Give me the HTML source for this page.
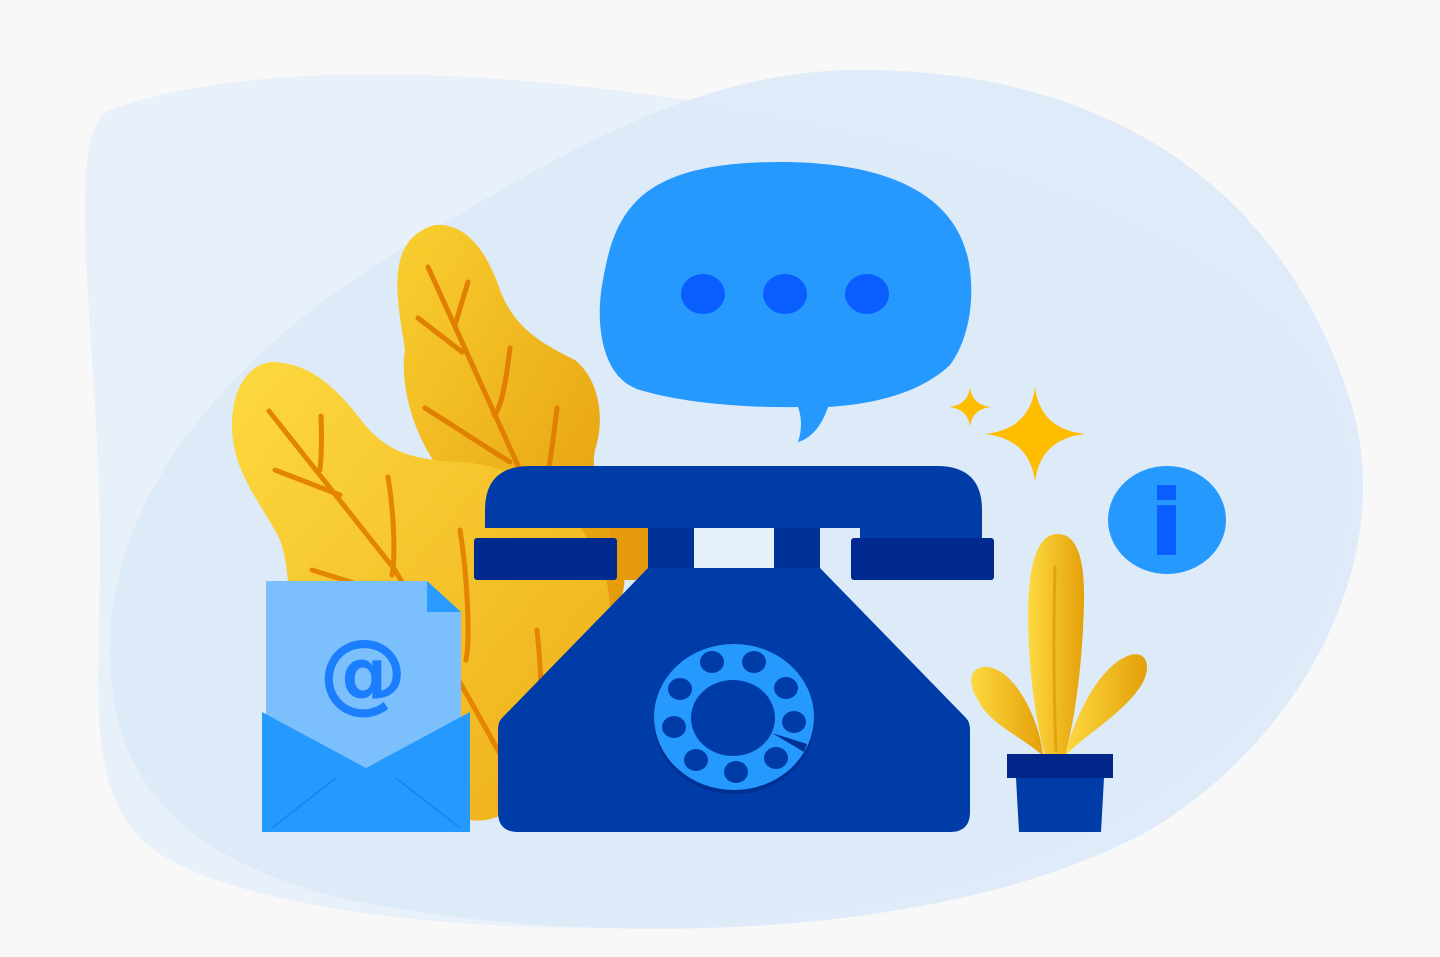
<!DOCTYPE html>
<html><head><meta charset="utf-8"><style>html,body{margin:0;padding:0;background:#f8f8f9;}svg{display:block}</style></head>
<body>
<svg width="1440" height="957" viewBox="0 0 1440 957" xmlns="http://www.w3.org/2000/svg">
<defs>
<linearGradient id="ly" x1="0" y1="0" x2="1" y2="1"><stop offset="0" stop-color="#fdd93f"/><stop offset="1" stop-color="#eeae18"/></linearGradient>
<linearGradient id="ly2" x1="0" y1="0" x2="1" y2="1"><stop offset="0" stop-color="#f9cf30"/><stop offset="1" stop-color="#e49a0b"/></linearGradient>
<linearGradient id="lh" x1="0" y1="0" x2="1" y2="0"><stop offset="0" stop-color="#fdd940"/><stop offset="1" stop-color="#e4a008"/></linearGradient>
</defs>
<rect width="1440" height="957" fill="#f8f8f9"/>
<path d="M110 110 C300 40 700 80 1000 170 C1250 250 1370 360 1350 520 C1330 700 1150 850 900 900 C650 950 300 930 170 860 C80 810 100 700 100 550 C100 350 60 130 110 110 Z" fill="#e3eef9" opacity="0.8"/>
<path d="M860 70 C1100 70 1280 180 1350 400 C1400 560 1300 740 1150 830 C950 940 600 950 350 900 C180 860 110 780 110 650 C110 480 250 330 450 220 C600 130 720 70 860 70 Z" fill="#dbe9f8" opacity="0.85"/>
<!-- back leaf -->
<path d="M435 225 C470 222 490 260 500 290 C515 330 545 345 575 360 C600 380 605 420 595 450 C585 500 640 560 620 600 C600 620 560 610 540 590 C500 560 470 520 440 470 C410 430 400 380 405 350 C400 310 380 240 435 225 Z" fill="url(#ly2)"/>
<g stroke="#e07f00" stroke-width="5" stroke-linecap="round" fill="none">
<path d="M428 267 L520 470 L560 570"/><path d="M468 282 L455 325"/><path d="M418 318 L462 352"/><path d="M510 348 C505 390 500 410 494 415"/><path d="M425 408 C460 430 490 450 510 462"/><path d="M557 408 C552 450 548 480 543 490"/>
</g>
<!-- front leaf -->
<path d="M275 362 C320 365 345 400 365 425 C390 455 420 460 460 462 C520 465 570 500 600 560 C625 620 600 700 560 760 C530 800 500 825 470 820 L300 700 C285 650 295 580 280 540 C260 500 230 470 232 420 C234 385 250 362 275 362 Z" fill="url(#ly)"/>
<g stroke="#e38500" stroke-width="5" stroke-linecap="round" fill="none">
<path d="M269 411 L395 570 L470 700 L520 790"/><path d="M321 416 C322 440 321 460 320 470"/><path d="M275 470 L340 495"/><path d="M388 477 C395 520 395 560 392 575"/><path d="M312 570 L360 585"/><path d="M460 530 C468 580 470 640 466 660"/><path d="M537 630 C540 660 542 690 540 700"/>
</g>
<!-- envelope -->
<path d="M266 581 L427 581 L461 612 L461 770 L266 770 Z" fill="#7bbffc"/>
<path d="M427 581 L461 612 L427 612 Z" fill="#2b9bff"/>
<text x="363" y="702" font-family="DejaVu Sans, sans-serif" font-weight="bold" font-size="88" fill="#1b7eff" text-anchor="middle">@</text>
<path d="M262 712 L366 768 L470 712 L470 832 L262 832 Z" fill="#2699ff"/>
<g stroke="#1b86f0" stroke-width="2"><path d="M272 828 L336 778"/><path d="M460 828 L396 778"/></g>
<!-- speech bubble -->
<path d="M780 162 C880 162 960 190 970 270 C975 310 965 345 950 365 C915 398 860 405 828 407 C822 425 812 438 798 442 C802 430 802 418 798 407 C740 408 680 402 640 390 C600 378 595 320 603 280 C615 210 640 162 780 162 Z" fill="#2699ff"/>
<ellipse cx="703" cy="294" rx="22" ry="20" fill="#0a5dff"/><ellipse cx="785" cy="294" rx="22" ry="20" fill="#0a5dff"/><ellipse cx="867" cy="294" rx="22" ry="20" fill="#0a5dff"/>
<!-- stars -->
<path d="M1035 387 Q1040 429 1085 434 Q1040 439 1035 482 Q1030 439 985 434 Q1030 429 1035 387 Z" fill="#ffbd00"/>
<path d="M970 387 Q972 405 991 407 Q972 409 970 427 Q968 409 949 407 Q968 405 970 387 Z" fill="#ffbd00"/>
<!-- info -->
<ellipse cx="1167" cy="520" rx="59" ry="54" fill="#2699ff"/>
<rect x="1157" y="485" width="19" height="15" fill="#0a5dff"/><rect x="1157" y="505" width="19" height="50" fill="#0a5dff"/>
<!-- phone -->
<rect x="610" y="520" width="40" height="60" fill="#e49a0b"/>
<rect x="694" y="528" width="80" height="40" fill="#e6f0fa"/>
<path d="M485 540 L485 510 Q485 466 530 466 L937 466 Q982 466 982 510 L982 540 L860 540 L860 528 L485 528 Z" fill="#003ca8"/>
<rect x="485" y="520" width="497" height="8" fill="#003ca8"/>
<rect x="648" y="528" width="46" height="45" fill="#003197"/><rect x="774" y="528" width="46" height="45" fill="#003197"/>
<path d="M648 568 L820 568 L966 718 Q970 722 970 730 L970 812 Q970 832 950 832 L518 832 Q498 832 498 812 L498 730 Q498 722 502 718 Z" fill="#003ca8"/>
<rect x="474" y="538" width="143" height="42" rx="3" fill="#002a8f"/>
<rect x="851" y="538" width="143" height="42" rx="3" fill="#002a8f"/>
<ellipse cx="734" cy="722" rx="80" ry="72" fill="#002f92"/>
<ellipse cx="734" cy="717" rx="80" ry="73" fill="#2699ff"/>
<ellipse cx="733" cy="718" rx="42" ry="38" fill="#003ca8"/>
<path d="M772 733 L807 744 L804 752 Z" fill="#003197"/>
<g fill="#003ca8">
<ellipse cx="712" cy="662" rx="12" ry="11"/><ellipse cx="754" cy="662" rx="12" ry="11"/><ellipse cx="786" cy="688" rx="12" ry="11"/><ellipse cx="794" cy="722" rx="12" ry="11"/><ellipse cx="776" cy="758" rx="12" ry="11"/><ellipse cx="736" cy="772" rx="12" ry="11"/><ellipse cx="696" cy="760" rx="12" ry="11"/><ellipse cx="674" cy="727" rx="12" ry="11"/><ellipse cx="680" cy="689" rx="12" ry="11"/>
</g>
<!-- plant -->
<path d="M1045 756 C1030 700 1025 620 1030 580 C1035 545 1045 534 1058 534 C1075 534 1085 555 1084 600 C1083 660 1075 720 1065 756 Z" fill="url(#lh)"/>
<path d="M1055 566 C1053 640 1054 700 1056 752" stroke="#e6a20e" stroke-width="3" fill="none"/>
<path d="M1043 756 C1020 735 990 725 978 700 C965 680 972 665 988 667 C1015 670 1040 720 1043 756 Z" fill="url(#lh)"/>
<path d="M1065 756 C1075 715 1100 665 1130 655 C1150 650 1152 672 1138 690 C1120 715 1085 735 1065 756 Z" fill="url(#lh)"/>
<rect x="1007" y="754" width="106" height="24" fill="#00268a"/>
<path d="M1016 778 L1104 778 L1101 832 L1019 832 Z" fill="#003ca8"/>
</svg>
</body></html>
